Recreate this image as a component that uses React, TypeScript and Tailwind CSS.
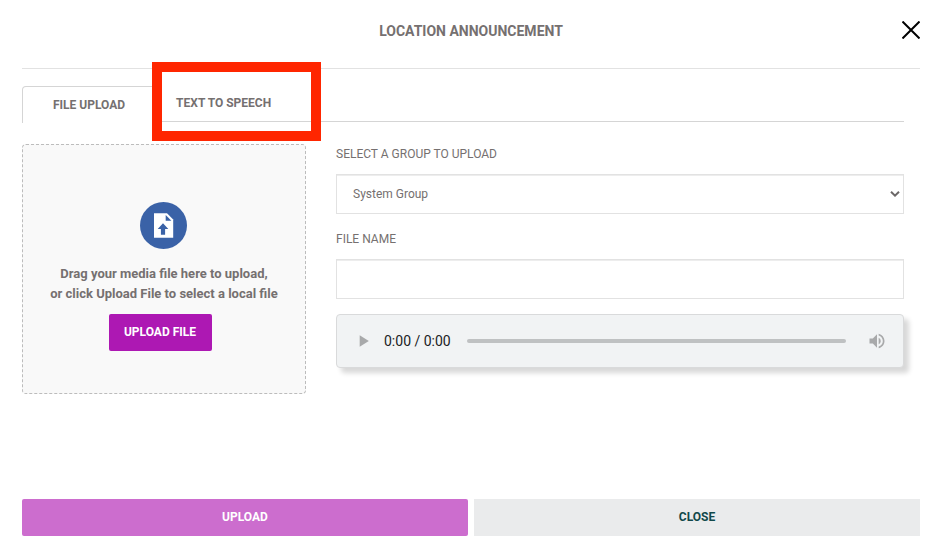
import { useState } from "react";
import { MdPlayArrow, MdVolumeUp } from "react-icons/md";

function Header() {
  return (
    <header className="flex h-[69px] items-start justify-between border-b border-[#e2e2e2] pt-[21px]">
      <span className="w-[18px]" />
      <h1 className="text-sm font-bold text-[#757070]">LOCATION ANNOUNCEMENT</h1>
      <button type="button" aria-label="Close dialog" className="h-[18px] w-[18px]">
        <svg viewBox="0 0 18 18" className="block h-full w-full" fill="none" stroke="#000" strokeWidth="2">
          <path d="M0.5 0.5 17.5 17.5M17.5 0.5 0.5 17.5" />
        </svg>
      </button>
    </header>
  );
}

function Tabs() {
  return (
    <div role="tablist" className="mt-[17px] flex h-9 border-b border-[#d5d5d5] text-xs font-bold text-[#757070]">
      <button
        type="button"
        role="tab"
        aria-selected="true"
        className="h-[37px] rounded-t border border-b-0 border-[#d5d5d5] bg-white px-[30px]"
      >
        FILE UPLOAD
      </button>
      <div className="relative flex">
        <button type="button" role="tab" aria-selected="false" className="h-[34px] px-5">
          TEXT TO SPEECH
        </button>
        <div className="pointer-events-none absolute -top-6 -left-1 h-[79px] w-[169px] border-10 border-[#ff2600]" />
      </div>
    </div>
  );
}

function DropZone() {
  return (
    <section className="flex h-[250px] w-[284px] shrink-0 flex-col items-center rounded border border-dashed border-[#bcbcbc] bg-[#f9f9f9] pt-[57px]">
      <svg viewBox="0 0 47 47" className="mr-px block h-[47px] w-[47px]">
        <circle cx="23.5" cy="23.5" r="23.5" fill="#3a62a7" />
        <path d="M14 11.2h13l6.2 6.2v18.4H14z" fill="#fff" />
        <path d="M25.7 13v5.7h5.7z" fill="#3a62a7" />
        <path d="M23 21.3 28.3 27h-3.2v5.7h-4.2V27h-3.2z" fill="#3a62a7" />
      </svg>
      <p className="mt-[15px] text-center text-[13px] leading-5 font-bold text-[#757070]">
        Drag your media file here to upload,
        <br />
        or click Upload File to select a local file
      </p>
      <button
        type="button"
        className="mt-[10px] mr-2 h-[37px] w-[103px] rounded-xs bg-[#ad18b3] pb-[2px] text-xs font-bold text-white"
      >
        UPLOAD FILE
      </button>
    </section>
  );
}

function AudioPlayer() {
  return (
    <div className="flex h-[54px] items-center rounded border border-[#d9dadb] bg-[#f1f3f4] px-4 shadow-[5px_5px_5px_#d8d8d8]">
      <button type="button" aria-label="Play" className="text-[#a8a9aa]">
        <MdPlayArrow size={20} />
      </button>
      <span className="ml-[11px] text-sm text-[#202124]">0:00 / 0:00</span>
      <input
        type="range"
        aria-label="Position"
        defaultValue={0}
        className="mx-4 h-1 min-w-0 flex-1 appearance-none rounded-full bg-[#bfc1c2] [&::-webkit-slider-thumb]:h-0 [&::-webkit-slider-thumb]:w-0 [&::-webkit-slider-thumb]:appearance-none"
      />
      <button type="button" aria-label="Mute" className="ml-[5px] text-[#a8a9aa]">
        <MdVolumeUp size={20} />
      </button>
    </div>
  );
}

function UploadForm() {
  const [name, setName] = useState("");
  return (
    <section className="min-w-0 flex-1 text-xs text-[#757070]">
      <label htmlFor="group" className="block leading-5">
        SELECT A GROUP TO UPLOAD
      </label>
      <div className="relative mt-[10px]">
        <select
          id="group"
          className="block h-10 w-full appearance-none border border-[#e2e2e2] bg-white px-4 pb-px shadow-[inset_0_1px_0_#ededed]"
        >
          <option>System Group</option>
        </select>
        <svg
          viewBox="0 0 10 6"
          className="pointer-events-none absolute top-[17px] right-1 h-[6px] w-[10px]"
          fill="none"
          stroke="#6b6767"
          strokeWidth="2"
        >
          <path d="M1 0.8 5 4.6 9 0.8" />
        </svg>
      </div>
      <label htmlFor="name" className="mt-[15px] block leading-5">
        FILE NAME
      </label>
      <input
        id="name"
        type="text"
        value={name}
        onChange={(e) => setName(e.target.value)}
        className="mt-[10px] mb-[15px] block h-10 w-full border border-[#e2e2e2] bg-white px-4 shadow-[inset_0_1px_0_#ededed]"
      />
      <AudioPlayer />
    </section>
  );
}

export default function App() {
  return (
    <main className="bg-white pr-[23px] pb-[18px] pl-[22px] font-[Roboto,sans-serif]">
      <Header />
      <div className="mr-4">
        <Tabs />
        <div className="mt-[22px] flex gap-[30px]">
          <DropZone />
          <UploadForm />
        </div>
      </div>
      <footer className="mt-[105px] grid grid-cols-2 gap-[6px] text-xs font-bold">
        <button type="button" className="h-[37px] rounded-xs bg-[#cc6dce] pb-[2px] text-white">
          UPLOAD
        </button>
        <button type="button" className="h-[37px] bg-[#eaebec] pb-[2px] text-[#11484a]">
          CLOSE
        </button>
      </footer>
    </main>
  );
}
